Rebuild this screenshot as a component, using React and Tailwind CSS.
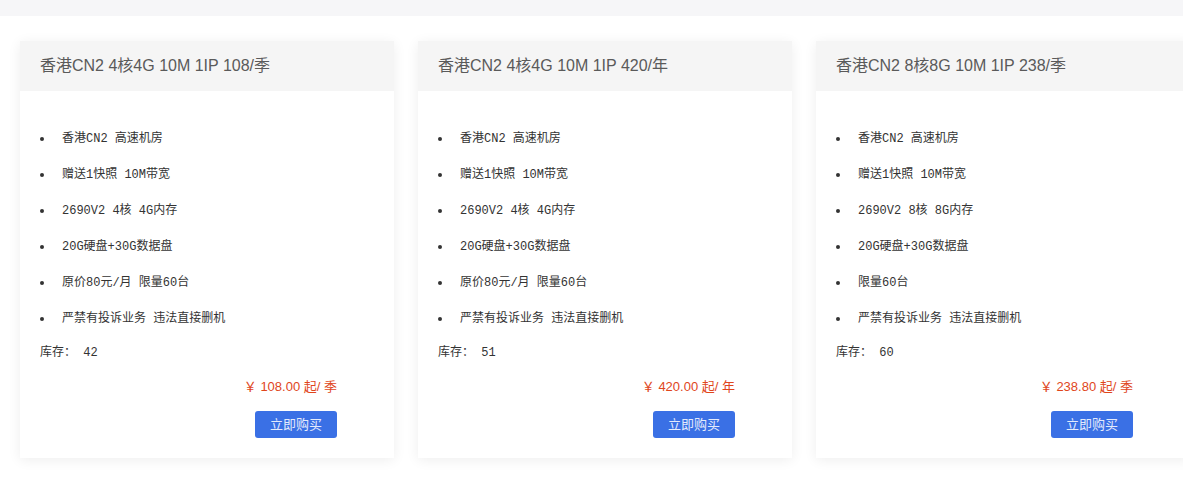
import React from "react";

const cards = [
  {
    title: "香港CN2 4核4G 10M 1IP 108/季",
    items: ["香港CN2 高速机房", "赠送1快照 10M带宽", "2690V2 4核 4G内存", "20G硬盘+30G数据盘", "原价80元/月 限量60台", "严禁有投诉业务 违法直接删机"],
    stock: "42",
    price: "￥ 108.00 起/ 季",
  },
  {
    title: "香港CN2 4核4G 10M 1IP 420/年",
    items: ["香港CN2 高速机房", "赠送1快照 10M带宽", "2690V2 4核 4G内存", "20G硬盘+30G数据盘", "原价80元/月 限量60台", "严禁有投诉业务 违法直接删机"],
    stock: "51",
    price: "￥ 420.00 起/ 年",
  },
  {
    title: "香港CN2 8核8G 10M 1IP 238/季",
    items: ["香港CN2 高速机房", "赠送1快照 10M带宽", "2690V2 8核 8G内存", "20G硬盘+30G数据盘", "限量60台", "严禁有投诉业务 违法直接删机"],
    stock: "60",
    price: "￥ 238.80 起/ 季",
  },
];

function Card({ c }) {
  return (
    <div className="w-[374px] shrink-0 bg-white shadow-[0_2px_12px_rgba(0,0,0,0.07)]">
      <div className="h-[50px] bg-[#f5f5f5] px-[20px] flex items-center text-[16px] text-[#5a5a5a] font-['Liberation_Sans','Noto_Sans_CJK_SC',sans-serif]">
        {c.title}
      </div>
      <div className="pt-[30px] pb-[20px] pl-[20px] pr-[57px]">
        <ul className="font-['Liberation_Mono','Noto_Sans_CJK_SC',monospace] text-[12px] text-[#333]">
          {c.items.map((it, i) => (
            <li key={i} className="h-[36px] flex items-center">
              <span className="w-[4px] h-[4px] rounded-full bg-[#333] mr-[18px]" />
              <span className="whitespace-pre">{it}</span>
            </li>
          ))}
        </ul>
        <div className="h-[32px] flex items-center text-[12px] text-[#333] font-['Liberation_Mono','Noto_Sans_CJK_SC',monospace] whitespace-pre">
          库存： {c.stock}
        </div>
        <div className="h-[36px] flex items-center justify-end text-[13px] text-[#e0461c] font-['Liberation_Sans','Noto_Sans_CJK_SC',sans-serif] whitespace-pre">
          {c.price}
        </div>
        <div className="flex justify-end mt-[6px]">
          <button className="w-[82px] h-[27px] rounded-[3px] bg-[#3a70e5] text-[#e3eafc] text-[13px] font-['Liberation_Sans','Noto_Sans_CJK_SC',sans-serif]">
            立即购买
          </button>
        </div>
      </div>
    </div>
  );
}

export default function App() {
  return (
    <div className="w-[1183px] h-[483px] bg-white overflow-hidden">
      <div className="h-[16px] bg-[#f6f6f8]" />
      <div className="flex gap-[24px] pl-[20px] pt-[25px]">
        {cards.map((c, i) => (
          <Card key={i} c={c} />
        ))}
      </div>
    </div>
  );
}
